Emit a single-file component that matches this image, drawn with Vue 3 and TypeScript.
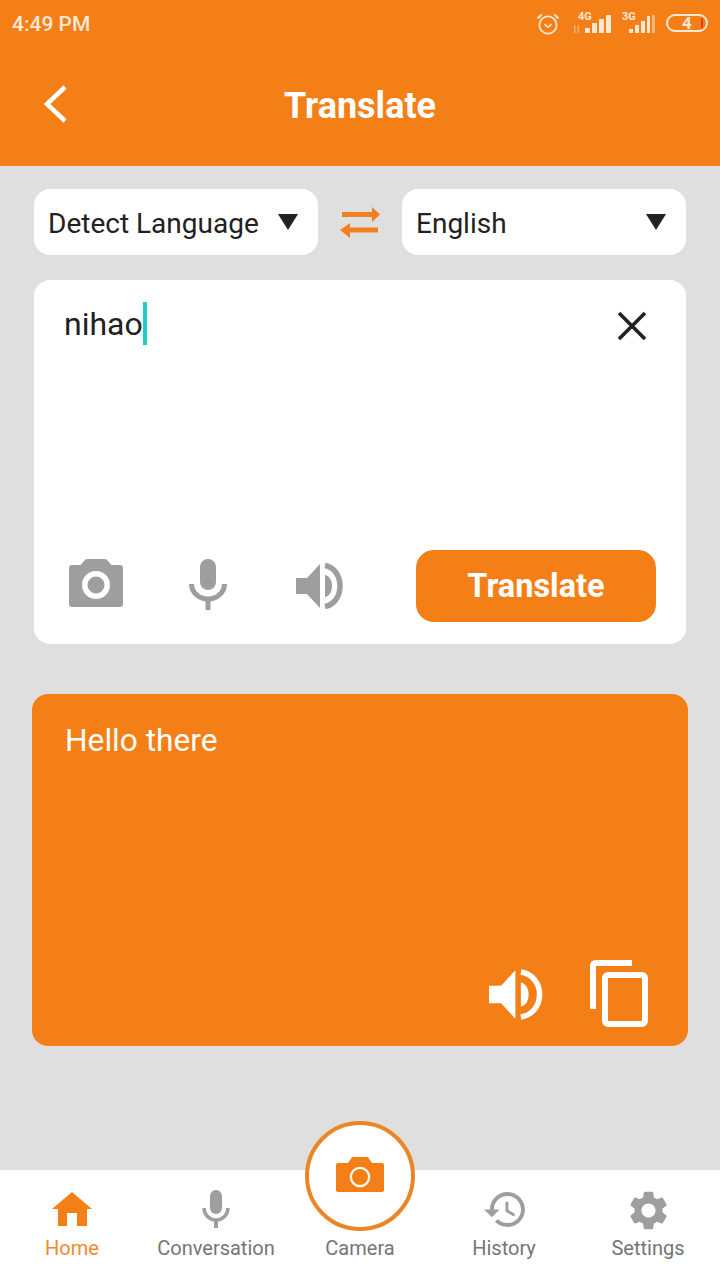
<template>
  <div class="page">
    <header class="header">
      <div class="status">
        <span class="time">4:49 PM</span>
        <div class="status-icons">
          <svg class="alarm" viewBox="0 0 24 24" fill="none" stroke="currentColor">
            <circle cx="12" cy="13" r="8.6" stroke-width="1.8" />
            <path d="M8.4 12.2l3.6 3 3.6-3" stroke-width="1.6" />
            <path d="M1.5 6.5l4.2-4M22.5 6.5l-4.2-4" stroke-width="2" />
          </svg>
          <div class="signal sig-4g">
            <span class="net">4G</span>
            <svg viewBox="0 0 40 24" fill="currentColor">
              <rect x="1" y="13" width="1.5" height="8" opacity=".45" />
              <rect x="4.5" y="13" width="1.5" height="8" opacity=".45" />
              <rect x="12" y="16" width="5" height="5" />
              <rect x="19" y="11" width="5" height="10" />
              <rect x="26" y="7" width="5" height="14" />
              <rect x="33" y="3" width="5" height="18" />
            </svg>
          </div>
          <div class="signal sig-3g">
            <span class="net">3G</span>
            <svg viewBox="0 0 36 24" fill="currentColor">
              <rect x="9" y="17" width="4" height="4" />
              <rect x="15" y="13" width="4" height="8" />
              <rect x="21" y="9" width="4" height="12" />
              <rect x="27" y="4" width="3" height="17" />
              <rect x="32" y="3" width="3" height="18" opacity=".5" />
            </svg>
          </div>
          <div class="battery">
            <span>4</span>
            <i class="battery-low"></i>
          </div>
        </div>
      </div>
      <div class="titlebar">
        <svg class="back" viewBox="0 0 28 40" fill="none" stroke="#fff" stroke-width="4.5">
          <path d="M23 3L5 20l18 17" />
        </svg>
        <h1>Translate</h1>
      </div>
    </header>

    <main class="content">
      <div class="lang-row">
        <div class="select">
          <span>Detect Language</span>
          <i class="caret"></i>
        </div>
        <svg class="swap" viewBox="0 0 40 31" fill="#f28021">
          <path d="M2 5h30V0l8 7.500-8 7.500v-5H2zM38 20.500H10V16l-10 7 10 8v-5.500h28z" />
        </svg>
        <div class="select">
          <span>English</span>
          <i class="caret"></i>
        </div>
      </div>

      <section class="input-card">
        <div class="input-top">
          <div class="input-text"><span>nihao</span><i class="cursor"></i></div>
          <svg class="clear" viewBox="0 0 30 30" fill="none" stroke="#212121" stroke-width="3.6">
            <path d="M2 2l26 26M28 2L2 28" />
          </svg>
        </div>
        <div class="toolbar">
          <div class="tools">
            <svg class="tool-camera" viewBox="0 0 54 48" fill="#9e9e9e">
              <path fill-rule="evenodd" d="M3 6h8.500l4.500-5c.6-.7 1.400-1 2.500-1h17c1.100 0 1.900.3 2.500 1l4.500 5H51c1.800 0 3 1.200 3 3v36c0 1.800-1.200 3-3 3H3c-1.800 0-3-1.200-3-3V9c0-1.800 1.200-3 3-3zm24 6a14 14 0 1 0 0 28 14 14 0 0 0 0-28zm0 5.500a8.500 8.500 0 1 1 0 17 8.500 8.500 0 0 1 0-17z" />
            </svg>
            <svg class="tool-mic" viewBox="0 0 38 51" fill="#9e9e9e">
              <rect x="11" y="0" width="16" height="31" rx="8" />
              <path d="M2.500 25a16.500 15 0 0 0 33 0" fill="none" stroke="#9e9e9e" stroke-width="5" />
              <rect x="16.500" y="38" width="5" height="13" />
            </svg>
            <svg class="tool-vol" viewBox="0 0 50 48" fill="#9e9e9e">
              <path d="M0 16h11L24 2v44L11 32H0z" />
              <path d="M29 13c4.500 1 7 5.500 7 11s-2.500 10-7 11z" />
              <path d="M29 3.500c9 1.500 15 10 15 20.500s-6 19-15 20.500" fill="none" stroke="#9e9e9e" stroke-width="5.500" />
            </svg>
          </div>
          <button class="translate-btn">Translate</button>
        </div>
      </section>

      <section class="result-card">
        <p class="result-text">Hello there</p>
        <div class="result-actions">
          <svg class="res-vol" viewBox="0 0 50 48" fill="#fff">
            <path d="M0 16h11L24 2v44L11 32H0z" />
            <path d="M29 13c4.500 1 7 5.500 7 11s-2.500 10-7 11z" />
            <path d="M29 3.500c10 1.500 17 10 17 20.500s-7 19-17 20.500" fill="none" stroke="#fff" stroke-width="5" />
          </svg>
          <svg class="res-copy" viewBox="0 0 58 67" fill="none" stroke="#fff" stroke-width="6">
            <path d="M42 3H6Q3 3 3 6v43" />
            <rect x="15" y="15" width="40" height="49" rx="3" />
          </svg>
        </div>
      </section>
    </main>

    <nav class="bottom-nav">
      <div v-for="item in navItems" :key="item.label" class="nav-item" :class="{ active: item.label === 'Home' }">
        <div class="nav-icon">
          <svg v-if="item.label === 'Home'" width="40" height="34" viewBox="0 0 40 34" fill="#f57f17">
            <path d="M20 0l20 17h-5v17H25V21H15v13H6V17H0z" />
          </svg>
          <svg v-else-if="item.label === 'Conversation'" class="nudge-mic" width="30" height="38" viewBox="0 0 30 38" fill="#9e9e9e">
            <rect x="9" y="0" width="12" height="24" rx="6" />
            <path d="M3 18a12 12 0 0 0 24 0" fill="none" stroke="#9e9e9e" stroke-width="3.500" />
            <rect x="13" y="29" width="4" height="9" />
          </svg>
          <svg v-else-if="item.label === 'History'" width="41" height="35" viewBox="1 3 21 18" fill="#9e9e9e">
            <path d="M13 3c-4.970 0-9 4.030-9 9H1l3.890 3.890.07.140L9 12H6c0-3.870 3.130-7 7-7s7 3.130 7 7-3.130 7-7 7c-1.930 0-3.680-.79-4.940-2.060l-1.420 1.420C8.270 19.990 10.510 21 13 21c4.970 0 9-4.030 9-9s-4.030-9-9-9zm-1 5v5l4.280 2.540.72-1.210-3.500-2.080V8H12z" />
          </svg>
          <svg v-else-if="item.label === 'Settings'" class="nudge-gear" width="39" height="39" viewBox="2 2 20 20" fill="#9e9e9e">
            <path d="M19.140 12.940c.04-.3.06-.61.06-.94 0-.32-.02-.64-.07-.94l2.030-1.580c.18-.14.23-.41.12-.61l-1.920-3.320c-.12-.22-.37-.29-.59-.22l-2.390.96c-.5-.38-1.030-.7-1.620-.94l-.36-2.540c-.04-.24-.24-.41-.48-.41h-3.840c-.24 0-.43.17-.47.41l-.36 2.540c-.59.24-1.130.57-1.620.94l-2.390-.96c-.22-.08-.47 0-.59.22L2.740 8.870c-.12.21-.08.47.12.61l2.030 1.580c-.05.3-.09.63-.09.94s.02.64.07.94l-2.030 1.580c-.18.14-.23.41-.12.61l1.920 3.320c.12.22.37.29.59.22l2.390-.96c.5.38 1.030.7 1.620.94l.36 2.540c.05.24.24.41.48.41h3.840c.24 0 .44-.17.47-.41l.36-2.540c.59-.24 1.130-.56 1.620-.94l2.390.96c.22.08.47 0 .59-.22l1.920-3.320c.12-.22.07-.47-.12-.61l-2.010-1.580zM12 15.600c-1.980 0-3.600-1.620-3.600-3.600s1.620-3.600 3.600-3.600 3.600 1.620 3.600 3.600-1.620 3.600-3.600 3.600z" />
          </svg>
          <div v-else class="camera-fab">
            <svg width="48" height="35" viewBox="0 0 48 35" fill="#f57f17">
              <path fill-rule="evenodd" d="M2 6h10l3.500-5c.4-.7 1-1 1.700-1h13.600c.7 0 1.300.3 1.700 1L36 6h10c1.200 0 2 .8 2 2v25c0 1.200-.8 2-2 2H2c-1.200 0-2-.8-2-2V8c0-1.200.8-2 2-2zm22 3.700a10.300 10.300 0 1 0 0 20.600 10.300 10.300 0 0 0 0-20.600zm0 2.300a8 8 0 1 1 0 16 8 8 0 0 1 0-16z" />
            </svg>
          </div>
        </div>
        <span class="nav-label">{{ item.label }}</span>
      </div>
    </nav>
  </div>
</template>

<script setup lang="ts">
const navItems = [
  { label: 'Home' },
  { label: 'Conversation' },
  { label: 'Camera' },
  { label: 'History' },
  { label: 'Settings' },
]
</script>

<style>
html,
body {
  margin: 0;
  background: #dfdfdf;
}
</style>

<style scoped>
.page {
  width: 720px;
  height: 1280px;
  display: flex;
  flex-direction: column;
  overflow: hidden;
  background: #dfdfdf;
  color: #212121;
  font-family: Roboto, 'Liberation Sans', sans-serif;
}

.header {
  height: 166px;
  flex-shrink: 0;
  background: #f57f17;
  color: #fce8d4;
}

.status {
  height: 48px;
  display: flex;
  align-items: center;
  justify-content: space-between;
  padding: 0 12px;
}

.time {
  font-size: 21px;
  font-weight: 500;
}

.status-icons {
  display: flex;
  align-items: center;
}

.alarm {
  width: 24px;
  height: 24px;
  margin-right: 13px;
}

.signal {
  position: relative;
  height: 24px;
}

.signal svg {
  display: block;
  height: 24px;
}

.sig-4g {
  width: 40px;
  margin-right: 7px;
}

.sig-4g svg {
  width: 40px;
}

.sig-3g {
  width: 36px;
  margin-right: 10px;
}

.sig-3g svg {
  width: 36px;
}

.net {
  position: absolute;
  top: -2px;
  left: 5px;
  font-size: 11px;
  font-weight: 700;
  line-height: 13px;
}

.sig-3g .net {
  left: 2px;
}

.battery {
  position: relative;
  width: 42px;
  height: 18px;
  margin-bottom: 2px;
  box-sizing: border-box;
  border: 2px solid currentColor;
  border-radius: 9px;
  display: flex;
  align-items: center;
  justify-content: center;
  font-size: 17px;
  font-weight: 700;
}

.battery-low {
  position: absolute;
  right: 3px;
  top: 2px;
  width: 2px;
  height: 10px;
  background: #d8421c;
}

.titlebar {
  position: relative;
  height: 114px;
  box-sizing: border-box;
  padding-top: 2px;
  display: flex;
  align-items: center;
  justify-content: center;
}

.titlebar h1 {
  margin: 0;
  font-size: 36px;
  font-weight: 700;
  color: #fff;
}

.back {
  position: absolute;
  left: 42px;
  top: 36px;
  width: 28px;
  height: 40px;
}

.content {
  flex: 1;
  display: flex;
  flex-direction: column;
  align-items: center;
  padding-top: 23px;
}

.lang-row {
  width: 652px;
  display: flex;
  align-items: center;
  justify-content: space-between;
}

.select {
  width: 284px;
  height: 66px;
  box-sizing: border-box;
  padding: 0 20px 0 14px;
  display: flex;
  align-items: center;
  justify-content: space-between;
  background: #fff;
  border-radius: 16px;
  font-size: 28px;
}

.select span {
  padding-top: 2px;
}

.caret {
  width: 0;
  height: 0;
  border-left: 10px solid transparent;
  border-right: 10px solid transparent;
  border-top: 16px solid #212121;
}

.swap {
  width: 40px;
  height: 31px;
}

.input-card {
  width: 652px;
  height: 364px;
  margin-top: 25px;
  box-sizing: border-box;
  padding: 21px 30px 22px;
  display: flex;
  flex-direction: column;
  justify-content: space-between;
  background: #fff;
  border-radius: 16px;
}

.input-top {
  display: flex;
  align-items: flex-start;
  justify-content: space-between;
}

.input-text {
  display: flex;
  align-items: center;
  height: 44px;
  font-size: 32px;
}

.input-text span {
  padding-top: 2px;
}

.cursor {
  width: 4px;
  height: 43px;
  background: #1fd0c2;
}

.clear {
  width: 30px;
  height: 30px;
  margin: 10px 9px 0 0;
}

.toolbar {
  display: flex;
  align-items: center;
  justify-content: space-between;
}

.tools {
  display: flex;
  align-items: center;
  padding-left: 5px;
}

.tool-camera {
  width: 54px;
  height: 48px;
  margin-bottom: 6px;
}

.tool-mic {
  width: 38px;
  height: 51px;
  margin: 0 0 4px 66px;
}

.tool-vol {
  width: 50px;
  height: 48px;
  margin-left: 69px;
}

.translate-btn {
  width: 240px;
  height: 72px;
  border: none;
  border-radius: 18px;
  background: #f57f17;
  color: #fff;
  font-family: inherit;
  font-size: 32.5px;
  font-weight: 700;
}

.result-card {
  width: 656px;
  height: 352px;
  margin-top: 50px;
  box-sizing: border-box;
  padding: 25px 32px 19px 33px;
  display: flex;
  flex-direction: column;
  justify-content: space-between;
  background: #f57f17;
  border-radius: 16px;
  color: #fff;
}

.result-text {
  margin: 0;
  font-size: 31.7px;
  line-height: 44px;
}

.result-actions {
  display: flex;
  align-items: flex-end;
  justify-content: flex-end;
  gap: 46px;
  margin-right: 8px;
}

.res-vol {
  width: 55px;
  height: 53px;
  margin-bottom: 6px;
}

.res-copy {
  width: 58px;
  height: 67px;
}

.bottom-nav {
  height: 110px;
  flex-shrink: 0;
  display: grid;
  grid-template-columns: repeat(5, 144px);
  background: #fff;
}

.nav-item {
  position: relative;
  display: flex;
  flex-direction: column;
  align-items: center;
  color: #757575;
}

.nav-item.active {
  color: #f08a2c;
}

.nav-icon {
  height: 66px;
  box-sizing: border-box;
  padding-top: 22px;
  display: flex;
  justify-content: center;
}

.nudge-mic {
  margin-top: -2px;
}

.nudge-gear {
  margin-top: -1px;
}

.nav-label {
  font-size: 20px;
  line-height: 24px;
}

.camera-fab {
  position: absolute;
  left: 17px;
  top: -49px;
  width: 110px;
  height: 110px;
  box-sizing: border-box;
  display: flex;
  align-items: center;
  justify-content: center;
  background: #fff;
  border: 4px solid #ec8526;
  border-radius: 50%;
}

.camera-fab svg {
  margin-bottom: 3px;
}
</style>
